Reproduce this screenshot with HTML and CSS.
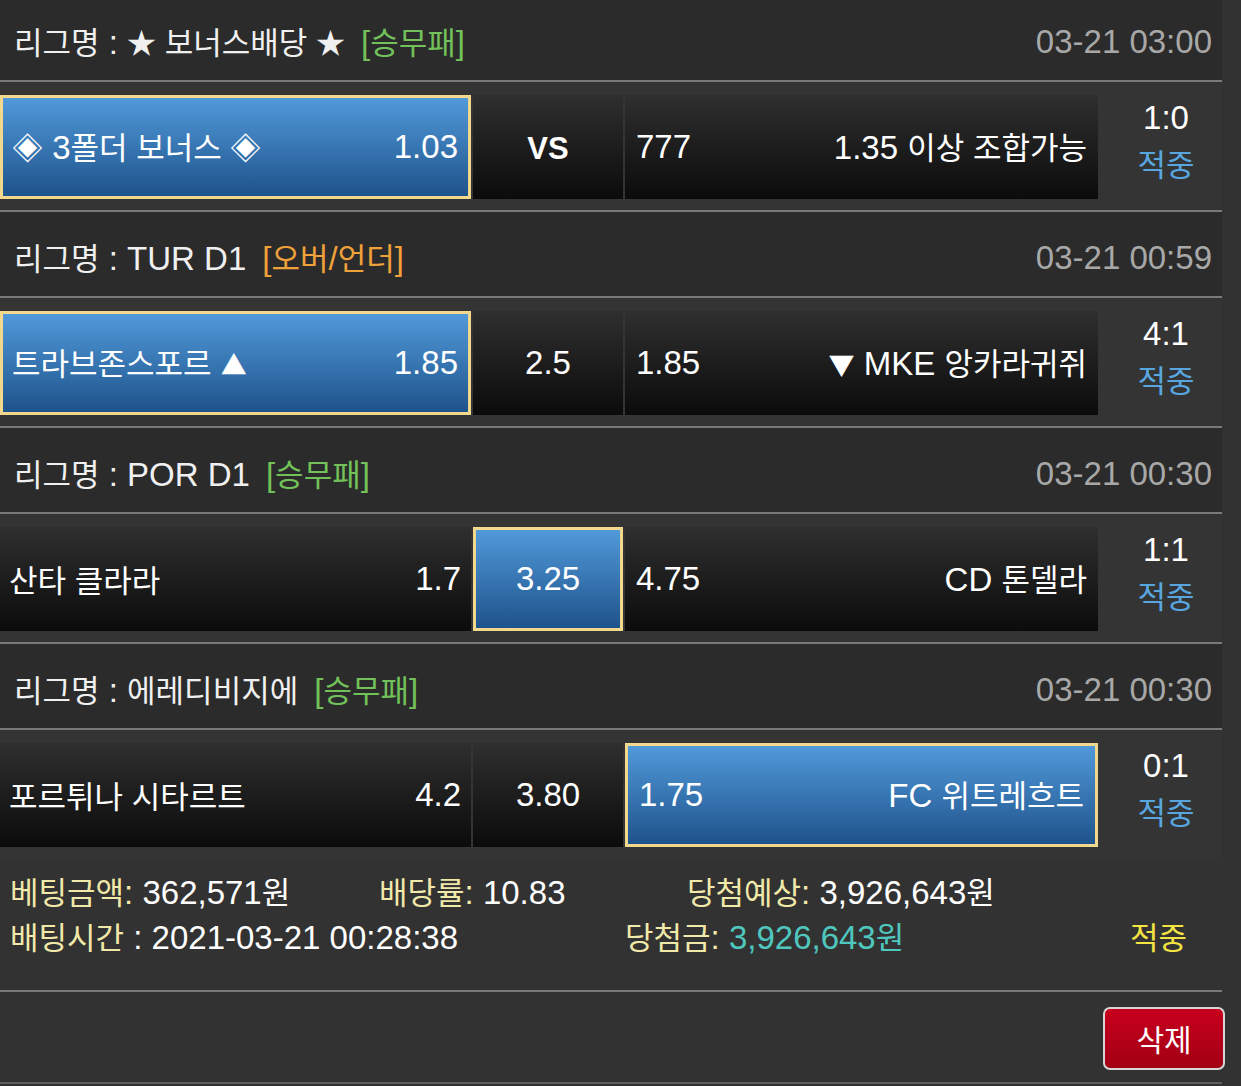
FILE: index.html
```html
<!DOCTYPE html>
<html lang="ko">
<head>
<meta charset="utf-8">
<title>베팅내역</title>
<link rel="stylesheet" href="styles.css">
</head>
<body>
<div class="wrap">

  <div class="league">
    <div class="lname"><span class="k">리그명</span> : <span class="k"><span class="star">★</span> 보너스배당 <span class="star">★</span></span><span class="tag green">[<span class="k">승무패</span>]</span></div>
    <div class="time">03-21 03:00</div>
  </div>
  <div class="match">
    <div class="cell c1 sel"><span><span class="k">◈</span> 3<span class="k">폴더 보너스 ◈</span></span><span>1.03</span></div>
    <div class="cell c2"><span class="vs">VS</span></div>
    <div class="cell c3"><span>777</span><span>1.35 <span class="k">이상 조합가능</span></span></div>
    <div class="score"><div>1:0</div><div class="k hit">적중</div></div>
  </div>

  <div class="league">
    <div class="lname"><span class="k">리그명</span> : TUR D1<span class="tag orange">[<span class="k">오버</span>/<span class="k">언더</span>]</span></div>
    <div class="time">03-21 00:59</div>
  </div>
  <div class="match">
    <div class="cell c1 sel"><span><span class="k">트라브존스포르</span> <span class="sym">▲</span></span><span>1.85</span></div>
    <div class="cell c2"><span>2.5</span></div>
    <div class="cell c3"><span>1.85</span><span><span class="sym">▼</span> MKE <span class="k">앙카라귀쥐</span></span></div>
    <div class="score"><div>4:1</div><div class="k hit">적중</div></div>
  </div>

  <div class="league">
    <div class="lname"><span class="k">리그명</span> : POR D1<span class="tag green">[<span class="k">승무패</span>]</span></div>
    <div class="time">03-21 00:30</div>
  </div>
  <div class="match">
    <div class="cell c1"><span class="k">산타 클라라</span><span>1.7</span></div>
    <div class="cell c2 sel"><span>3.25</span></div>
    <div class="cell c3"><span>4.75</span><span>CD <span class="k">톤델라</span></span></div>
    <div class="score"><div>1:1</div><div class="k hit">적중</div></div>
  </div>

  <div class="league">
    <div class="lname"><span class="k">리그명</span> : <span class="k">에레디비지에</span><span class="tag green">[<span class="k">승무패</span>]</span></div>
    <div class="time">03-21 00:30</div>
  </div>
  <div class="match last">
    <div class="cell c1"><span class="k">포르튀나 시타르트</span><span>4.2</span></div>
    <div class="cell c2"><span>3.80</span></div>
    <div class="cell c3 sel"><span>1.75</span><span>FC <span class="k">위트레흐트</span></span></div>
    <div class="score"><div>0:1</div><div class="k hit">적중</div></div>
  </div>

  <div class="summary">
    <div class="srow">
      <div class="f1"><span class="lbl"><span class="k">베팅금액</span>:</span> 362,571<span class="k">원</span></div>
      <div class="f2"><span class="lbl"><span class="k">배당률</span>:</span> 10.83</div>
      <div class="f3"><span class="lbl"><span class="k">당첨예상</span>:</span> 3,926,643<span class="k">원</span></div>
    </div>
    <div class="srow">
      <div class="g1"><span class="lbl"><span class="k">배팅시간</span></span> : 2021-03-21 00:28:38</div>
      <div class="g2"><span class="lbl"><span class="k">당첨금</span>:</span> <span class="win">3,926,643<span class="k">원</span></span></div>
      <div class="g3"><span class="k result">적중</span></div>
    </div>
  </div>

  <div class="actions">
    <button class="del" type="button"><span class="k">삭제</span></button>
  </div>

</div>
</body>
</html>
```

FILE: styles.css
```css
html, body {
  margin: 0;
  padding: 0;
}
body {
  background: #323232;
  color: #fff;
  font-family: "Liberation Sans", Arial, "Noto Sans CJK KR", sans-serif;
  font-size: 33px;
  overflow: hidden;
}
.k {
  font-family: "Noto Sans CJK KR", "Liberation Sans", sans-serif;
  font-size: 31px;
}
.sym {
  font-family: "Noto Sans CJK KR", sans-serif;
  font-size: 26px;
}
.star {
  font-family: "Noto Sans CJK KR", sans-serif;
  font-size: 29px;
}
.wrap {
  width: 1222px;
  margin-top: -4px;
}

/* league header */
.league {
  box-sizing: border-box;
  height: 86px;
  padding: 7px 10px 0 14px;
  background: #2b2b2b;
  border-bottom: 2px solid #7a7a7a;
  display: flex;
  align-items: center;
  justify-content: space-between;
  line-height: 40px;
  white-space: nowrap;
}
.lname {
  color: #f0f0f0;
}
.tag {
  margin-left: 16px;
}
.green { color: #72c15a; }
.orange { color: #f0a23a; }
.time {
  color: #a8a8a8;
}

/* match row */
.match {
  box-sizing: border-box;
  height: 130px;
  padding-top: 13px;
  background: #343434;
  border-bottom: 2px solid #7a7a7a;
  display: grid;
  grid-template-columns: 471px 150px 473px 1fr;
  column-gap: 2px;
  align-items: start;
  line-height: 40px;
  white-space: nowrap;
}
.match.last {
  border-bottom: 0;
  height: 128px;
}
.cell {
  box-sizing: border-box;
  height: 104px;
  display: flex;
  align-items: center;
  justify-content: space-between;
  background: linear-gradient(#2f2f2f, #0b0b0b);
}
.c1 { padding: 0 10px 0 9px; }
.c2 { justify-content: center; }
.c3 { padding: 0 11px; }
.cell.sel {
  background: linear-gradient(#5199da, #1e538b);
  border: 3px solid #f2d88c;
}
.vs {
  font-weight: bold;
  font-size: 31px;
  position: relative;
  top: 2px;
}
.score {
  padding-left: 10px;
  text-align: center;
  line-height: 45px;
}
.score > div {
  height: 45px;
}
.hit {
  color: #58a6e0;
  display: block;
}

/* summary */
.summary {
  box-sizing: border-box;
  height: 134px;
  padding: 10px 0 0 10px;
  border-bottom: 2px solid #7a7a7a;
  line-height: 45px;
  white-space: nowrap;
}
.srow {
  display: flex;
  height: 45px;
}
.f1 { width: 369px; }
.f2 { width: 308px; }
.g1 { width: 615px; }
.g2 { width: 505px; }
.lbl { color: #f1e9a9; }
.win { color: #4fc7bf; }
.result { color: #f3e443; }

/* actions */
.actions {
  box-sizing: border-box;
  height: 92px;
  padding-top: 15px;
  border-bottom: 2px solid #5e5e5e;
  display: flex;
  justify-content: flex-end;
}
.del {
  width: 122px;
  height: 63px;
  margin-right: -3px;
  padding: 0;
  border: 2px solid #d6d6d6;
  border-radius: 7px;
  background: linear-gradient(#c8001e, #a20014);
  color: #fff;
  line-height: 1;
  cursor: pointer;
}
.del .k {
  font-size: 30px;
}
```
